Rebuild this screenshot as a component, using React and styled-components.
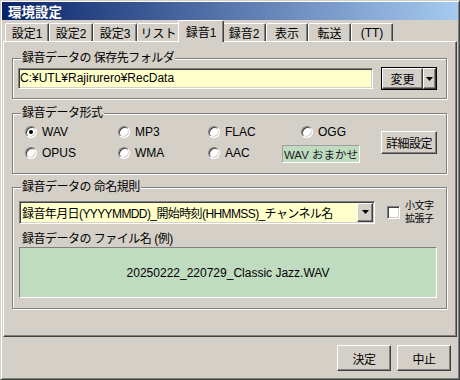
import React from "react"
import styled, { createGlobalStyle, css } from "styled-components"

const GlobalStyle = createGlobalStyle`
  html, body {
    margin: 0;
    padding: 0;
    background: #d4d0c8;
  }
  body {
    font-family: "Liberation Sans", "Noto Sans CJK JP", sans-serif;
    font-size: 12px;
    color: #000;
  }
  * { box-sizing: border-box; }
`

// classic 3D edges
const raised = css`
  border: 1px solid;
  border-color: #fff #404040 #404040 #fff;
  box-shadow: inset -1px -1px #808080;
`
const sunken = css`
  border: 1px solid;
  border-color: #808080 #fff #fff #808080;
  box-shadow: inset 1px 1px #404040, inset -1px -1px #d4d0c8;
`

const tabs = [
  { label: "設定1", w: 44 },
  { label: "設定2", w: 44 },
  { label: "設定3", w: 44 },
  { label: "リスト", w: 43 },
  { label: "録音1", w: 42, active: true },
  { label: "録音2", w: 44 },
  { label: "表示", w: 42 },
  { label: "転送", w: 43 },
  { label: "(TT)", w: 42 },
]

const formats = [
  ["WAV", true], ["MP3"], ["FLAC"], ["OGG"],
  ["OPUS"], ["WMA"], ["AAC"],
]

const Arrow = () => (
  <svg width="7" height="4" viewBox="0 0 7 4">
    <path d="M0 0h7L3.5 4z" fill="#000" />
  </svg>
)

const App = () => {
  return (
    <>
      <GlobalStyle />
      <Window>
        <TitleBar>環境設定</TitleBar>
        <TabStrip>
          {tabs.map((t, i) => (
            <Tab key={i} $w={t.w} $active={t.active}>{t.label}</Tab>
          ))}
        </TabStrip>
        <Panel>
          <Group>
            <Legend>録音データの 保存先フォルダ</Legend>
            <GroupBody $pad="2px 9px 8px 5px">
              <Row $gap={8}>
                <TextField>C:¥UTL¥Rajirurero¥RecData</TextField>
                <SplitButton>
                  <SplitMain>変更</SplitMain>
                  <SplitArrow><Arrow /></SplitArrow>
                </SplitButton>
              </Row>
            </GroupBody>
          </Group>

          <Group $top={7}>
            <Legend>録音データ形式</Legend>
            <GroupBody $pad="1px 11px 10px 12px">
              <Row $between>
                <RadioGrid>
                  {formats.map(([name, on], i) => (
                    <RadioItem key={i}>
                      <RadioDot $on={on} />
                      {name}
                    </RadioItem>
                  ))}
                  <AutoBox>WAV おまかせ</AutoBox>
                </RadioGrid>
                <PushButton $w={56} $h={23}>詳細設定</PushButton>
              </Row>
            </GroupBody>
          </Group>

          <Group $top={6}>
            <Legend>録音データの 命名規則</Legend>
            <GroupBody $pad="5px 9px 10px 6px">
              <Row $gap={12}>
                <Combo>
                  <ComboText>録音年月日(YYYYMMDD)_開始時刻(HHMMSS)_チャンネル名</ComboText>
                  <ComboButton><Arrow /></ComboButton>
                </Combo>
                <Row $gap={5}>
                  <CheckBox />
                  <SmallLabels>
                    <span>小文字</span>
                    <span>拡張子</span>
                  </SmallLabels>
                </Row>
              </Row>
              <Caption>録音データの ファイル名 (例)</Caption>
              <Preview>20250222_220729_Classic Jazz.WAV</Preview>
            </GroupBody>
          </Group>
        </Panel>
        <Footer>
          <PushButton $w={54} $h={26}>決定</PushButton>
          <PushButton $w={54} $h={26}>中止</PushButton>
        </Footer>
      </Window>
    </>
  )
}

export default App

const Window = styled.div`
  width: 460px;
  height: 380px;
  display: flex;
  flex-direction: column;
  background: #d4d0c8;
  border: 1px solid;
  border-color: #d4d0c8 #404040 #404040 #d4d0c8;
  box-shadow: inset 1px 1px #fff, inset -1px -1px #808080;
  padding: 1px;
`

const TitleBar = styled.div`
  height: 18px;
  flex: none;
  display: flex;
  align-items: center;
  padding-left: 6px;
  background: linear-gradient(to right, #0a246a, #a6caf0);
  color: #fff;
  font-weight: bold;
  font-size: 13.5px;
  font-family: "Noto Sans CJK JP", sans-serif;
`

const TabStrip = styled.div`
  height: 21px;
  flex: none;
  display: flex;
  align-items: flex-end;
  padding-left: 3px;
`

const Tab = styled.div`
  width: ${p => p.$w}px;
  height: 18px;
  flex: none;
  display: flex;
  align-items: center;
  justify-content: center;
  border: 1px solid;
  border-bottom: 0;
  border-color: #fff #404040 transparent #fff;
  box-shadow: inset -1px 0 #808080;
  border-radius: 2px 2px 0 0;
  background: #d4d0c8;
  white-space: nowrap;
  ${p => p.$active && css`
    position: relative;
    z-index: 1;
    width: ${p.$w + 4}px;
    height: 22px;
    margin: 0 -2px -1px;
    padding-bottom: 1px;
  `}
`

const Panel = styled.div`
  height: 296px;
  flex: none;
  margin: 0 1px;
  display: flex;
  flex-direction: column;
  padding: 9px 9px 0 8px;
  border: 1px solid;
  border-color: #fff #404040 #404040 #fff;
  box-shadow: inset -1px -1px #808080;
`

const Group = styled.fieldset`
  margin: ${p => p.$top || 0}px 0 0;
  padding: 0;
  min-width: 0;
  border: 1px solid #808080;
  box-shadow: 1px 1px 0 #fff, inset 1px 1px 0 #fff;
`

const Legend = styled.legend`
  margin-left: 8px;
  padding: 0 1px;
  font-size: 12px;
  line-height: 14px;
  letter-spacing: -0.5px;
  background: #d4d0c8;
`

const GroupBody = styled.div`
  padding: ${p => p.$pad};
`

const Row = styled.div`
  display: flex;
  align-items: center;
  gap: ${p => p.$gap || 0}px;
  justify-content: ${p => (p.$between ? "space-between" : "flex-start")};
`

const TextField = styled.div`
  width: 355px;
  height: 21px;
  ${sunken};
  background: #ffffcc;
  padding: 0 1px;
  line-height: 18px;
  white-space: nowrap;
`

const SplitButton = styled.div`
  width: 56px;
  height: 23px;
  display: flex;
  border: 1px solid #000;
`

const SplitMain = styled.div`
  flex: 1;
  display: flex;
  align-items: center;
  justify-content: center;
  ${raised};
`

const SplitArrow = styled.div`
  width: 13px;
  display: flex;
  align-items: center;
  justify-content: center;
  ${raised};
`

const PushButton = styled.div`
  width: ${p => p.$w}px;
  height: ${p => p.$h}px;
  flex: none;
  display: flex;
  align-items: center;
  justify-content: center;
  ${raised};
  letter-spacing: -0.5px;
`

const RadioGrid = styled.div`
  display: grid;
  grid-template-columns: 93px 90px 93px 80px;
  grid-auto-rows: 21px;
`

const RadioItem = styled.label`
  display: flex;
  align-items: center;
  gap: 5px;
`

const RadioDot = styled.span`
  width: 12px;
  height: 12px;
  flex: none;
  border-radius: 50%;
  background: #fff;
  border: 1px solid;
  border-color: #808080 #fff #fff #808080;
  box-shadow: inset 1px 1px #404040, inset -1px -1px #d4d0c8;
  display: flex;
  align-items: center;
  justify-content: center;
  &::after {
    content: "";
    width: 4px;
    height: 4px;
    border-radius: 50%;
    background: ${p => (p.$on ? "#000" : "transparent")};
  }
`

const AutoBox = styled.div`
  width: 78px;
  height: 18px;
  margin-left: -19px;
  align-self: end;
  display: flex;
  align-items: center;
  justify-content: center;
  background: #c0dcc0;
  border: 1px solid;
  border-color: #a0a0a0 #fff #fff #a0a0a0;
  font-size: 11.5px;
  color: #202020;
  white-space: nowrap;
`

const Combo = styled.div`
  width: 356px;
  height: 23px;
  display: flex;
  align-items: center;
  justify-content: space-between;
  padding: 1px;
  background: #ffffcc;
  ${sunken};
`

const ComboText = styled.span`
  padding-left: 1px;
  white-space: nowrap;
  letter-spacing: -0.6px;
`

const ComboButton = styled.div`
  width: 16px;
  height: 19px;
  display: flex;
  align-items: center;
  justify-content: center;
  background: #d4d0c8;
  ${raised};
`

const CheckBox = styled.span`
  width: 13px;
  height: 13px;
  background: #fff;
  ${sunken};
`

const SmallLabels = styled.div`
  display: flex;
  flex-direction: column;
  font-size: 10px;
  line-height: 13px;
  letter-spacing: -0.5px;
`

const Caption = styled.div`
  margin: 7px 0 0 3px;
  line-height: 14px;
  letter-spacing: -0.5px;
`

const Preview = styled.div`
  width: 418px;
  height: 51px;
  margin-top: 1px;
  display: flex;
  align-items: center;
  justify-content: center;
  background: #c0dcc0;
  border: 1px solid;
  border-color: #808080 #fff #fff #808080;
`

const Footer = styled.div`
  display: flex;
  justify-content: flex-end;
  gap: 6px;
  padding: 8px 7px 0 0;
`
